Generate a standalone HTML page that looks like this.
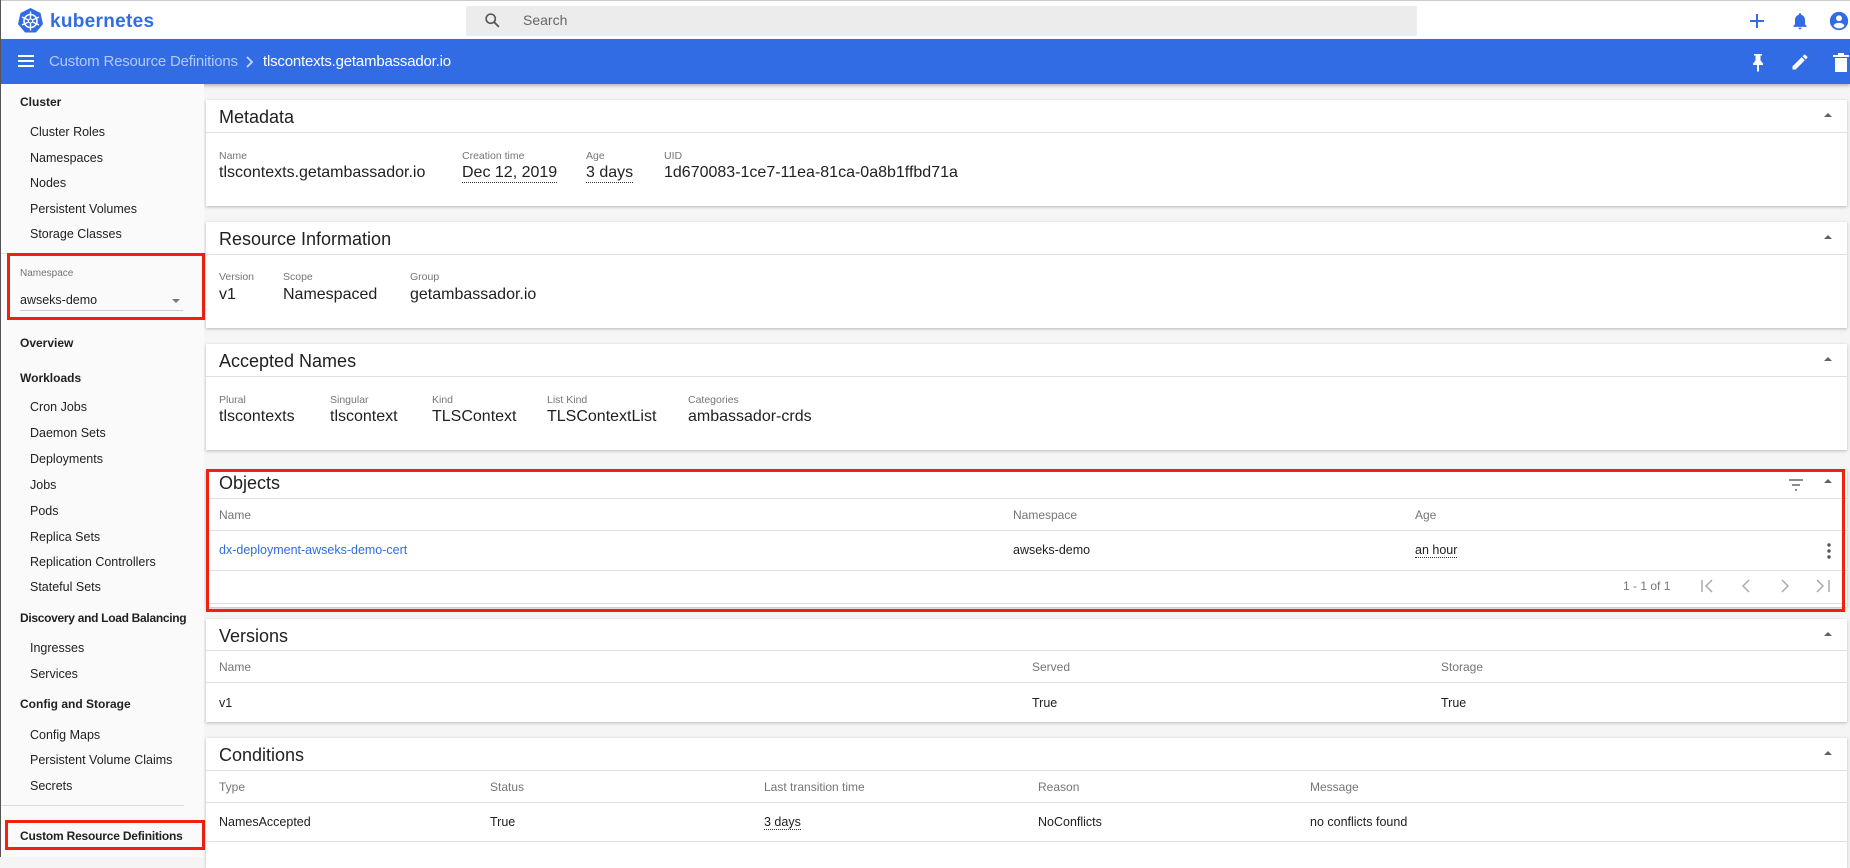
<!DOCTYPE html>
<html><head><meta charset="utf-8"><style>
*{margin:0;padding:0;box-sizing:border-box}
body{width:1850px;height:857px;overflow:hidden;background:#f5f5f5;font-family:"Liberation Sans",sans-serif;color:#212121;position:relative}
.a{position:absolute;white-space:nowrap}
.sb{position:absolute;left:0;top:84px;width:204px;height:773px;background:#fafafa}
.sh{font-size:12px;font-weight:bold;left:20px}
.si{font-size:12.5px;left:30px}
.card{position:absolute;left:206px;width:1641px;background:#fff;box-shadow:0 1px 3px rgba(0,0,0,.25)}
.ttl{position:absolute;left:13px;font-size:18px;color:#212121}
.hl{position:absolute;left:0;right:0;height:1px;background:#e0e0e0}
.lb{position:absolute;font-size:10.5px;color:#757575}
.vl{position:absolute;font-size:16px;color:#212121}
.th{position:absolute;font-size:12px;color:#757575}
.td{position:absolute;font-size:12.5px;color:#212121}
.car{position:absolute;right:15px;width:0;height:0;border-left:4px solid transparent;border-right:4px solid transparent;border-bottom:4px solid #616161}
.red{position:absolute;border:3px solid #f1210e}
.dot{border-bottom:1px dotted #333}
</style></head><body>
<div class="a" style="left:0;top:0;width:1px;height:857px;background:#555;z-index:5"></div>
<!-- top bar -->
<div class="a" style="left:0;top:0;width:1850px;height:39px;background:#fff;border-top:1px solid #ccc"></div>
<svg class="a" style="left:17px;top:7px" width="27" height="27" viewBox="0 0 27 27"><polygon points="13.5,1 23.5,6 26,17 19,25.5 8,25.5 1,17 3.5,6" fill="#326ce5"/><circle cx="13.5" cy="14" r="6.5" fill="none" stroke="#fff" stroke-width="1.6"/><g stroke="#fff" stroke-width="1.4"><line x1="13.5" y1="4.5" x2="13.5" y2="23.5"/><line x1="5" y1="10" x2="22" y2="18"/><line x1="22" y1="10" x2="5" y2="18"/></g><circle cx="13.5" cy="14" r="2" fill="#326ce5" stroke="#fff"/></svg>
<div class="a" style="left:50px;top:11px;font-size:19px;font-weight:bold;color:#326ce5;letter-spacing:.3px">kubernetes</div>
<div class="a" style="left:466px;top:6px;width:951px;height:30px;background:#ececec;border-radius:2px"></div>
<svg class="a" style="left:484px;top:12px" width="17" height="17" viewBox="0 0 24 24"><circle cx="9.5" cy="9.5" r="6.5" fill="none" stroke="#555" stroke-width="2.2"/><line x1="14.5" y1="14.5" x2="21" y2="21" stroke="#555" stroke-width="2.5"/></svg>
<div class="a" style="left:523px;top:12px;font-size:14px;color:#666">Search</div>
<svg class="a" style="left:1748px;top:12px" width="18" height="18" viewBox="0 0 18 18"><path d="M9 2v14M2 9h14" stroke="#326ce5" stroke-width="2"/></svg>
<svg class="a" style="left:1790px;top:10px" width="20" height="22" viewBox="0 0 24 24"><path d="M12 22c1.1 0 2-.9 2-2h-4c0 1.1.9 2 2 2zm6-6v-5c0-3.1-1.6-5.6-4.5-6.3V4c0-.8-.7-1.5-1.5-1.5s-1.5.7-1.5 1.5v.7C7.6 5.4 6 7.9 6 11v5l-2 2v1h16v-1l-2-2z" fill="#326ce5"/></svg>
<svg class="a" style="left:1828px;top:10px" width="22" height="22" viewBox="0 0 24 24"><circle cx="12" cy="12" r="10" fill="#326ce5"/><circle cx="12" cy="9" r="3.2" fill="#fff"/><path d="M6 17c1.5-2.5 3.5-3 6-3s4.5.5 6 3c-1.5 2-3.6 3-6 3s-4.5-1-6-3z" fill="#fff"/></svg>
<!-- blue bar -->
<div class="a" style="left:0;top:39px;width:1850px;height:45px;background:#326ce5;box-shadow:0 2px 3px rgba(0,0,0,.25)"></div>
<svg class="a" style="left:17px;top:53px" width="18" height="16" viewBox="0 0 18 16"><path d="M1 3h16M1 8h16M1 13h16" stroke="#fff" stroke-width="2"/></svg>
<div class="a" style="left:49px;top:53px;font-size:15px;letter-spacing:-.2px;color:#b3c9f5">Custom Resource Definitions</div>
<svg class="a" style="left:244px;top:55px" width="12" height="14" viewBox="0 0 12 14"><path d="M3 2l5 5-5 5" stroke="#c9d8f7" stroke-width="1.8" fill="none"/></svg>
<div class="a" style="left:263px;top:53px;font-size:15px;letter-spacing:-.2px;color:#fff">tlscontexts.getambassador.io</div>
<svg class="a" style="left:1750px;top:52px" width="16" height="20" viewBox="0 0 16 20"><path d="M4 2h8v1.5h-1.5v5l2.5 3v1.5H9v6l-1 1-1-1v-6H3v-1.5l2.5-3v-5H4z" fill="#fff"/></svg>
<svg class="a" style="left:1790px;top:52px" width="20" height="20" viewBox="0 0 24 24"><path d="M3 17.25V21h3.75L17.8 9.94l-3.75-3.75L3 17.25zM20.7 7.04a1 1 0 000-1.41l-2.34-2.34a1 1 0 00-1.410 0l-1.83 1.83 3.75 3.750 1.83-1.83z" fill="#fff"/></svg>
<svg class="a" style="left:1832px;top:52px" width="18" height="22" viewBox="0 0 18 22"><path d="M3 6h12v14H3zM1 3h16v2H1zM6 1h6v2H6z" fill="#fff"/></svg>
<!-- sidebar -->
<div class="sb"></div>
<div class="a sh" style="top:95px">Cluster</div>
<div class="a si" style="top:125px">Cluster Roles</div>
<div class="a si" style="top:151px">Namespaces</div>
<div class="a si" style="top:176px">Nodes</div>
<div class="a si" style="top:202px">Persistent Volumes</div>
<div class="a si" style="top:227px">Storage Classes</div>
<div class="a" style="left:0;top:253px;width:204px;height:1px;background:#e0e0e0"></div>
<div class="a" style="left:20px;top:268px;font-size:10px;color:#757575">Namespace</div>
<div class="a" style="left:20px;top:293px;font-size:12.5px">awseks-demo</div>
<div class="a" style="left:172px;top:299px;border-left:4px solid transparent;border-right:4px solid transparent;border-top:4px solid #777"></div>
<div class="a" style="left:20px;top:310px;width:163px;height:1px;background:#ccc"></div>
<div class="red" style="left:7px;top:253px;width:198px;height:67px"></div>
<div class="a sh" style="top:336px">Overview</div>
<div class="a sh" style="top:371px">Workloads</div>
<div class="a si" style="top:400px">Cron Jobs</div>
<div class="a si" style="top:426px">Daemon Sets</div>
<div class="a si" style="top:452px">Deployments</div>
<div class="a si" style="top:478px">Jobs</div>
<div class="a si" style="top:504px">Pods</div>
<div class="a si" style="top:530px">Replica Sets</div>
<div class="a si" style="top:555px">Replication Controllers</div>
<div class="a si" style="top:580px">Stateful Sets</div>
<div class="a sh" style="top:611px;letter-spacing:-.3px">Discovery and Load Balancing</div>
<div class="a si" style="top:641px">Ingresses</div>
<div class="a si" style="top:667px">Services</div>
<div class="a sh" style="top:697px">Config and Storage</div>
<div class="a si" style="top:728px">Config Maps</div>
<div class="a si" style="top:753px">Persistent Volume Claims</div>
<div class="a si" style="top:779px">Secrets</div>
<div class="a" style="left:0;top:805px;width:184px;height:1px;background:#ddd"></div>
<div class="a sh" style="top:829px;letter-spacing:-.2px">Custom Resource Definitions</div>
<div class="red" style="left:5px;top:820px;width:200px;height:30px"></div>
<!-- Metadata -->
<div class="card" style="top:100px;height:106px">
<div class="ttl" style="top:7px">Metadata</div><div class="car" style="top:13px"></div>
<div class="hl" style="top:32px"></div>
<div class="lb" style="left:13px;top:50px">Name</div><div class="vl" style="left:13px;top:64px">tlscontexts.getambassador.io</div>
<div class="lb" style="left:256px;top:50px">Creation time</div><div class="vl dot" style="left:256px;top:64px">Dec 12, 2019</div>
<div class="lb" style="left:380px;top:50px">Age</div><div class="vl dot" style="left:380px;top:64px">3 days</div>
<div class="lb" style="left:458px;top:50px">UID</div><div class="vl" style="left:458px;top:64px">1d670083-1ce7-11ea-81ca-0a8b1ffbd71a</div>
</div>
<!-- Resource Information -->
<div class="card" style="top:222px;height:106px">
<div class="ttl" style="top:7px">Resource Information</div><div class="car" style="top:13px"></div>
<div class="hl" style="top:32px"></div>
<div class="lb" style="left:13px;top:49px">Version</div><div class="vl" style="left:13px;top:64px">v1</div>
<div class="lb" style="left:77px;top:49px">Scope</div><div class="vl" style="left:77px;top:64px">Namespaced</div>
<div class="lb" style="left:204px;top:49px">Group</div><div class="vl" style="left:204px;top:64px">getambassador.io</div>
</div>
<!-- Accepted Names -->
<div class="card" style="top:344px;height:106px">
<div class="ttl" style="top:7px">Accepted Names</div><div class="car" style="top:13px"></div>
<div class="hl" style="top:32px"></div>
<div class="lb" style="left:13px;top:50px">Plural</div><div class="vl" style="left:13px;top:64px">tlscontexts</div>
<div class="lb" style="left:124px;top:50px">Singular</div><div class="vl" style="left:124px;top:64px">tlscontext</div>
<div class="lb" style="left:226px;top:50px">Kind</div><div class="vl" style="left:226px;top:64px">TLSContext</div>
<div class="lb" style="left:341px;top:50px">List Kind</div><div class="vl" style="left:341px;top:64px">TLSContextList</div>
<div class="lb" style="left:482px;top:50px">Categories</div><div class="vl" style="left:482px;top:64px">ambassador-crds</div>
</div>
<!-- Objects -->
<div class="card" style="top:470px;height:137px">
<div class="ttl" style="top:3px">Objects</div><div class="car" style="top:9px"></div>
<svg class="a" style="left:1582px;top:9px" width="16" height="12" viewBox="0 0 16 12"><path d="M1 1h14M4 6h8M7 11h2" stroke="#666" stroke-width="1.6"/></svg>
<div class="hl" style="top:28px"></div>
<div class="th" style="left:13px;top:38px">Name</div><div class="th" style="left:807px;top:38px">Namespace</div><div class="th" style="left:1209px;top:38px">Age</div>
<div class="hl" style="top:60px"></div>
<div class="td" style="left:13px;top:73px;color:#326ce5">dx-deployment-awseks-demo-cert</div>
<div class="td" style="left:807px;top:73px">awseks-demo</div>
<div class="td dot" style="left:1209px;top:73px">an hour</div>
<svg class="a" style="left:1620px;top:72px" width="6" height="18" viewBox="0 0 6 18"><circle cx="3" cy="3" r="1.7" fill="#555"/><circle cx="3" cy="9" r="1.7" fill="#555"/><circle cx="3" cy="15" r="1.7" fill="#555"/></svg>
<div class="hl" style="top:100px"></div>
<div class="td" style="left:1417px;top:109px;color:#777;font-size:12px">1 - 1 of 1</div>
<svg class="a" style="left:1494px;top:108px" width="140" height="16" viewBox="0 0 140 16"><g stroke="#aaa" stroke-width="1.5" fill="none"><path d="M2 2v12M12 2 6 8l6 6"/><path d="M49 2 43 8l6 6"/><path d="M82 2l6 6-6 6"/><path d="M117 2l6 6-6 6M129 2v12"/></g></svg>
<div class="hl" style="top:133px"></div>
</div>
<div class="red" style="left:206px;top:469px;width:1639px;height:143px"></div>
<!-- Versions -->
<div class="card" style="top:619px;height:103px">
<div class="ttl" style="top:7px">Versions</div><div class="car" style="top:13px"></div>
<div class="hl" style="top:31px"></div>
<div class="th" style="left:13px;top:41px">Name</div><div class="th" style="left:826px;top:41px">Served</div><div class="th" style="left:1235px;top:41px">Storage</div>
<div class="hl" style="top:63px"></div>
<div class="td" style="left:13px;top:77px">v1</div><div class="td" style="left:826px;top:77px">True</div><div class="td" style="left:1235px;top:77px">True</div>
</div>
<!-- Conditions -->
<div class="card" style="top:738px;height:130px">
<div class="ttl" style="top:7px">Conditions</div><div class="car" style="top:13px"></div>
<div class="hl" style="top:32px"></div>
<div class="th" style="left:13px;top:42px">Type</div><div class="th" style="left:284px;top:42px">Status</div><div class="th" style="left:558px;top:42px">Last transition time</div><div class="th" style="left:832px;top:42px">Reason</div><div class="th" style="left:1104px;top:42px">Message</div>
<div class="hl" style="top:64px"></div>
<div class="td" style="left:13px;top:77px">NamesAccepted</div><div class="td" style="left:284px;top:77px">True</div><div class="td dot" style="left:558px;top:77px">3 days</div><div class="td" style="left:832px;top:77px">NoConflicts</div><div class="td" style="left:1104px;top:77px">no conflicts found</div>
<div class="hl" style="top:103px"></div>
</div>
</body></html>
